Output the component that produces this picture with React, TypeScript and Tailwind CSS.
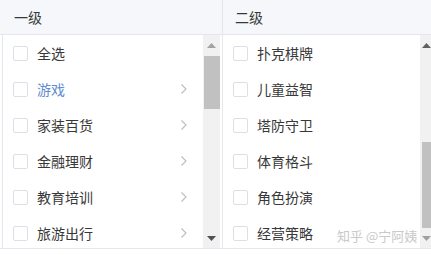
import React from "react";

/* =====================
   Data
===================== */

const level1 = [
    { label: "全选", arrow: false },
    { label: "游戏", arrow: true, active: true },
    { label: "家装百货", arrow: true },
    { label: "金融理财", arrow: true },
    { label: "教育培训", arrow: true },
    { label: "旅游出行", arrow: true },
];

const level2 = ["扑克棋牌", "儿童益智", "塔防守卫", "体育格斗", "角色扮演", "经营策略"];

/* =====================
   Pieces
===================== */

const Checkbox: React.FC = () => (
    <span className="w-[15px] h-[15px] shrink-0 rounded-[2px] border border-[#dcdfe6] bg-white" />
);

const Chevron: React.FC = () => (
    <svg width="8" height="12" viewBox="0 0 8 12" fill="none">
        <path d="M1.5 1.5 L6 6 L1.5 10.5" stroke="#b8bcc4" strokeWidth="1.1" />
    </svg>
);

const ArrowUp: React.FC<{ color?: string }> = ({ color = "#a3a3a3" }) => (
    <svg width="9" height="5" viewBox="0 0 9 5">
        <path d="M0 5 L4.5 0 L9 5 Z" fill={color} />
    </svg>
);

const ArrowDown: React.FC<{ color?: string }> = ({ color = "#505050" }) => (
    <svg width="9" height="5" viewBox="0 0 9 5">
        <path d="M0 0 L9 0 L4.5 5 Z" fill={color} />
    </svg>
);

/* =====================
   Component
===================== */

const App: React.FC = () => {
    return (
        <div
            className="relative w-[431px] h-[255px] overflow-hidden bg-white text-[14px] text-[#383838]"
            style={{ fontFamily: '"Noto Sans CJK SC", "Noto Sans", sans-serif' }}
        >
            {/* Header */}
            <div className="flex h-[35px] bg-[#f5f7fa] border-b border-[#e4e7ed]">
                <div className="w-[223px] border-r border-[#e4e7ed] pl-[14px] flex items-center">
                    一级
                </div>
                <div className="flex-1 pl-[12px] flex items-center">二级</div>
            </div>

            {/* Body */}
            <div className="flex h-[214px] pl-[2px] border-b border-[#e4e7ed]">
                {/* Left column */}
                <div className="w-[221px] flex border-l border-r border-[#e4e7ed]">
                    <div className="flex-1 flex flex-col">
                        {level1.map((item, i) => (
                            <div key={i} className="h-[36px] shrink-0 flex items-center pl-[10px] pr-[15px]">
                                <Checkbox />
                                <span
                                    className={
                                        "ml-[9px] flex-1 " + (item.active ? "text-[#628bcf]" : "text-[#383838]")
                                    }
                                >
                                    {item.label}
                                </span>
                                {item.arrow && <Chevron />}
                            </div>
                        ))}
                    </div>
                    <div className="w-[17px] mr-[2px] bg-[#f1f1f1] flex flex-col items-center">
                        <div className="h-[21px] flex items-center justify-center">
                            <ArrowUp />
                        </div>
                        <div className="w-[16px] h-[53px] bg-[#c1c1c1]" />
                        <div className="flex-1" />
                        <div className="h-[20px] flex items-center justify-center">
                            <ArrowDown />
                        </div>
                    </div>
                </div>

                {/* Right column */}
                <div className="flex-1 flex">
                    <div className="flex-1 flex flex-col">
                        {level2.map((label, i) => (
                            <div key={i} className="h-[36px] shrink-0 flex items-center pl-[10px]">
                                <Checkbox />
                                <span className="ml-[9px]">{label}</span>
                            </div>
                        ))}
                    </div>
                    <div className="w-[11px] bg-[#f1f1f1] flex flex-col items-start">
                        <div className="h-[20px] pl-[2px] flex items-center">
                            <ArrowUp color="#606060" />
                        </div>
                        <div className="w-[11px] h-[86px] mt-[87px] ml-[2px] bg-[#c1c1c1]" />
                        <div className="flex-1" />
                        <div className="h-[20px] pl-[2px] flex items-center">
                            <ArrowDown color="#a0a0a0" />
                        </div>
                    </div>
                </div>
            </div>

            {/* Watermark */}
            <div className="absolute left-[337px] top-[226px] text-[13px] text-[#c9c9c9] pointer-events-none">
                知乎 @宁阿姨
            </div>
        </div>
    );
};

export default App;
